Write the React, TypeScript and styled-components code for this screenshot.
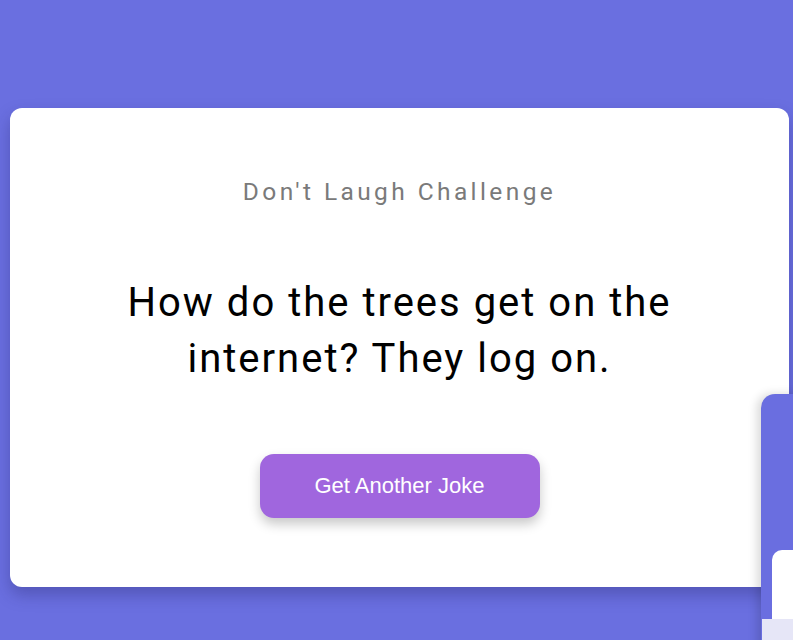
import React from "react";
import styled, { createGlobalStyle } from "styled-components";

const Global = createGlobalStyle`
  html, body { margin: 0; padding: 0; }
  body {
    background: #6a6fe0;
    min-height: 640px;
    overflow: hidden;
    font-family: Roboto, "Liberation Sans", sans-serif;
  }
`;

const Page = styled.div`
  position: relative;
  height: 640px;
  padding: 108px 4px 0 10px;
  box-sizing: border-box;
`;

const Card = styled.div`
  background: #ffffff;
  border-radius: 12px;
  box-shadow: 0 8px 16px rgba(40, 40, 110, 0.35);
  padding: 69px 40px 69px;
  display: flex;
  flex-direction: column;
  align-items: center;
  text-align: center;
`;

const Title = styled.h2`
  margin: 0;
  font-family: Roboto, sans-serif;
  font-weight: 400;
  font-size: 24.5px;
  line-height: 30px;
  letter-spacing: 3.4px;
  color: #7a7a7a;
`;

const Joke = styled.p`
  margin: 68px 0 0;
  max-width: 620px;
  font-family: Roboto, sans-serif;
  font-weight: 400;
  font-size: 40px;
  line-height: 56px;
  letter-spacing: 2px;
  color: #000;
`;

const Button = styled.button`
  margin-top: 67px;
  width: 280px;
  height: 64px;
  border: none;
  border-radius: 14px;
  background: #a066de;
  color: #fff;
  font-family: Arial, "Liberation Sans", sans-serif;
  font-size: 22px;
  box-shadow: 0 6px 12px rgba(0, 0, 0, 0.22);
  cursor: pointer;
`;

const SidePanel = styled.div`
  position: absolute;
  left: 761px;
  top: 394px;
  width: 60px;
  height: 260px;
  background: #6a6ee0;
  border-radius: 14px 0 0 0;
  box-shadow: -4px 0 10px rgba(0, 0, 0, 0.15);
`;

const SideInner = styled.div`
  position: absolute;
  left: 11px;
  top: 156px;
  width: 60px;
  height: 80px;
  background: #fff;
  border-radius: 10px 0 0 0;
`;

const SideBar = styled.div`
  position: absolute;
  left: 1px;
  top: 225px;
  width: 60px;
  height: 30px;
  background: #e6e6f7;
`;

export default function App() {
  return (
    <>
      <Global />
      <Page>
        <Card>
          <Title>Don't Laugh Challenge</Title>
          <Joke>How do the trees get on the internet? They log on.</Joke>
          <Button>Get Another Joke</Button>
        </Card>
        <SidePanel>
          <SideInner />
          <SideBar />
        </SidePanel>
      </Page>
    </>
  );
}
